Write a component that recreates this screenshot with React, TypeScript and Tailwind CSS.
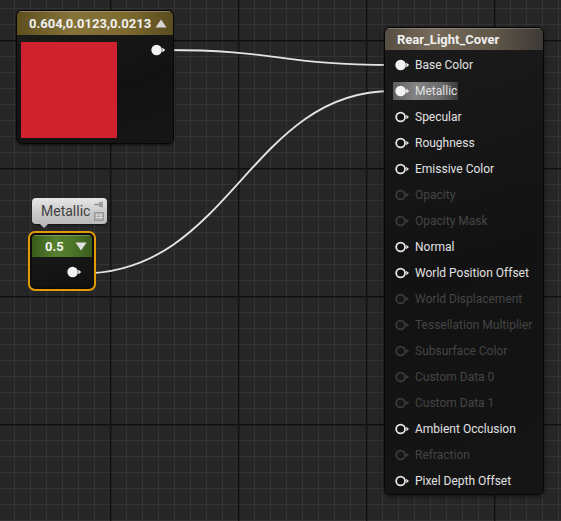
import React from "react";

type PinState = "c" | "o" | "d";

function Pin({ s }: { s: PinState }) {
  if (s === "c") {
    return (
      <svg width="15" height="12" viewBox="0 0 15 12" className="shrink-0">
        <circle cx="5.6" cy="6" r="5.3" fill="#f2f2f2" />
        <path d="M11.3 3.6 L14.2 6 L11.3 8.4 Z" fill="#f2f2f2" />
      </svg>
    );
  }
  const col = s === "o" ? "#e6e6e6" : "#3c3c3c";
  const fill = s === "o" ? "#111111" : "#161616";
  return (
    <svg width="15" height="12" viewBox="0 0 15 12" className="shrink-0">
      <circle cx="5.6" cy="6" r="4.4" fill={fill} stroke={col} strokeWidth="1.8" />
      <path d="M11.3 3.8 L14 6 L11.3 8.2 Z" fill={col} />
    </svg>
  );
}

const rows: [string, PinState][] = [
  ["Base Color", "c"],
  ["Metallic", "c"],
  ["Specular", "o"],
  ["Roughness", "o"],
  ["Emissive Color", "o"],
  ["Opacity", "d"],
  ["Opacity Mask", "d"],
  ["Normal", "o"],
  ["World Position Offset", "o"],
  ["World Displacement", "d"],
  ["Tessellation Multiplier", "d"],
  ["Subsurface Color", "d"],
  ["Custom Data 0", "d"],
  ["Custom Data 1", "d"],
  ["Ambient Occlusion", "o"],
  ["Refraction", "d"],
  ["Pixel Depth Offset", "o"],
];

function Grid() {
  const majorX = [-18, 110, 238, 366, 494];
  const majorY = [40, 168, 296, 424];
  return (
    <svg className="absolute inset-0" width="561" height="521" viewBox="0 0 561 521">
      <defs>
        <pattern id="minor" x="14" y="8" width="16" height="16" patternUnits="userSpaceOnUse">
          <rect x="0" y="0" width="16" height="1" fill="#343434" />
          <rect x="0" y="0" width="1" height="16" fill="#343434" />
        </pattern>
      </defs>
      <rect width="561" height="521" fill="#262626" />
      <rect width="561" height="521" fill="url(#minor)" />
      {majorX.map((x) => (
        <rect key={"x" + x} x={x} y="0" width="1.4" height="521" fill="#101010" />
      ))}
      {majorY.map((y) => (
        <rect key={"y" + y} x="0" y={y} width="561" height="1.4" fill="#101010" />
      ))}
    </svg>
  );
}

function Wires() {
  return (
    <svg className="absolute inset-0" width="561" height="521" viewBox="0 0 561 521">
      <path d="M164 50 C 280 50, 280 65, 392 65" fill="none" stroke="#e4e4e4" strokeWidth="1.8" />
      <path d="M82 273.5 C 230 273.5, 250 91, 392 91" fill="none" stroke="#e4e4e4" strokeWidth="1.8" />
    </svg>
  );
}

export default function App() {
  return (
    <div
      className="relative w-[561px] h-[521px] overflow-hidden bg-[#262626]"
      style={{ fontFamily: "Roboto, 'Noto Sans', sans-serif" }}
    >
      <Grid />
      <Wires />

      {/* Constant3Vector node */}
      <div className="absolute left-[16px] top-[10px] w-[158px] h-[134px] rounded-[6px] border border-[#070707] bg-[linear-gradient(160deg,#1d1d1c,#121212_60%,#161616)] shadow-[0_1px_3px_rgba(0,0,0,0.6)] overflow-hidden">
        <div className="h-[24px] flex items-center justify-between pl-[12px] pr-[6px] bg-[linear-gradient(to_right,#5e4f1f,#86733a_35%,#7c6a2f_70%,#5a4c20)] shadow-[inset_0_1px_0_rgba(255,255,255,0.25)]">
          <span className="text-[13px] font-bold text-[#f0f0f0] leading-none">0.604,0.0123,0.0213</span>
          <svg width="12" height="9" viewBox="0 0 12 9">
            <path d="M6 0.5 L11.5 8.5 L0.5 8.5 Z" fill="#d6d6d6" />
          </svg>
        </div>
        <div className="flex pt-[7px] pl-[4px]">
          <div className="w-[96px] h-[96px] bg-[#cf222f]" />
          <div className="ml-[34px] mt-[2px]">
            <Pin s="c" />
          </div>
        </div>
      </div>

      {/* Tooltip */}
      <div className="absolute left-[32px] top-[198px] w-[75px] h-[26px] rounded-[4px] bg-[linear-gradient(to_bottom,#e6e6e6,#c8c8c8_60%,#bababa)] flex items-center pl-[9px] shadow-[0_1px_2px_rgba(0,0,0,0.5)]">
        <span className="text-[14px] text-[#404040] leading-none">Metallic</span>
        <svg className="absolute right-[3px] top-[3px]" width="10" height="7" viewBox="0 0 10 7">
          <path d="M0.5 3.5 H6 M6 1 V6 M8 0.5 V6.5" stroke="#8a8a8a" strokeWidth="1.4" fill="none" />
        </svg>
        <svg className="absolute right-[3px] bottom-[3px]" width="10" height="9" viewBox="0 0 10 9">
          <rect x="0.5" y="0.5" width="9" height="8" fill="#b0b0b0" stroke="#909090" strokeWidth="0.8" />
          <path d="M2 3 H4 M5 3 H8 M2 5.5 H3.5 M5 5.5 H8" stroke="#f2f2f2" strokeWidth="1" />
        </svg>
        <div className="absolute left-[8px] -bottom-[4px] w-0 h-0 border-l-[4px] border-r-[4px] border-t-[4px] border-l-transparent border-r-transparent border-t-[#bababa]" />
      </div>

      {/* Scalar parameter node (selected) */}
      <div className="absolute left-[28px] top-[231px] w-[68px] h-[60px] rounded-[7px] border-2 border-[#e39a05] p-[2px] bg-[#0d0d0d]">
        <div className="w-full h-full rounded-[4px] overflow-hidden bg-[linear-gradient(170deg,#1c1c1b,#111111)]">
          <div className="h-[22px] flex items-center justify-between pl-[13px] pr-[5px] bg-[linear-gradient(to_right,#3a5a1c,#56812e_40%,#4c7428_70%,#3a5a1c)] shadow-[inset_0_1px_0_rgba(255,255,255,0.25)]">
            <span className="text-[13px] font-bold text-[#f2f2f2] leading-none">0.5</span>
            <svg width="12" height="9" viewBox="0 0 12 9">
              <path d="M0.5 0.5 L11.5 0.5 L6 8.5 Z" fill="#e0e0e0" />
            </svg>
          </div>
          <div className="pl-[35px] pt-[9px]">
            <Pin s="c" />
          </div>
        </div>
      </div>

      {/* Material result node */}
      <div className="absolute left-[384px] top-[27px] w-[160px] h-[468px] rounded-[6px] border border-[#060606] bg-[linear-gradient(165deg,#1b1b1b,#121212_50%,#151515)] shadow-[0_1px_4px_rgba(0,0,0,0.6)] overflow-hidden">
        <div className="h-[22px] flex items-center pl-[12px] bg-[linear-gradient(to_right,#574e42,#776b5a_30%,#5f5649_70%,#3d3935)] shadow-[inset_0_1px_0_rgba(255,255,255,0.2)]">
          <span className="text-[13px] font-bold text-[#f0f0f0] leading-none">Rear_Light_Cover</span>
        </div>
        <div className="flex flex-col pt-[2px]">
          {rows.map(([label, s]) => (
            <div key={label} className="h-[26px] flex items-center pl-[8px]">
              <div
                className={
                  label === "Metallic"
                    ? "h-[18px] flex items-center gap-[5px] pl-[2px] pr-[1px] bg-[linear-gradient(to_right,#5e5e5e,#858585_35%,#6a6a6a_75%,#3a3a3a)]"
                    : "h-[18px] flex items-center gap-[5px] pl-[2px] pr-[1px]"
                }
              >
                <Pin s={s} />
                <span
                  className={
                    s === "d"
                      ? "text-[12px] leading-none text-[#454545] whitespace-nowrap"
                      : "text-[12px] leading-none text-[#e2e2e2] whitespace-nowrap"
                  }
                >
                  {label}
                </span>
              </div>
            </div>
          ))}
        </div>
      </div>
    </div>
  );
}
